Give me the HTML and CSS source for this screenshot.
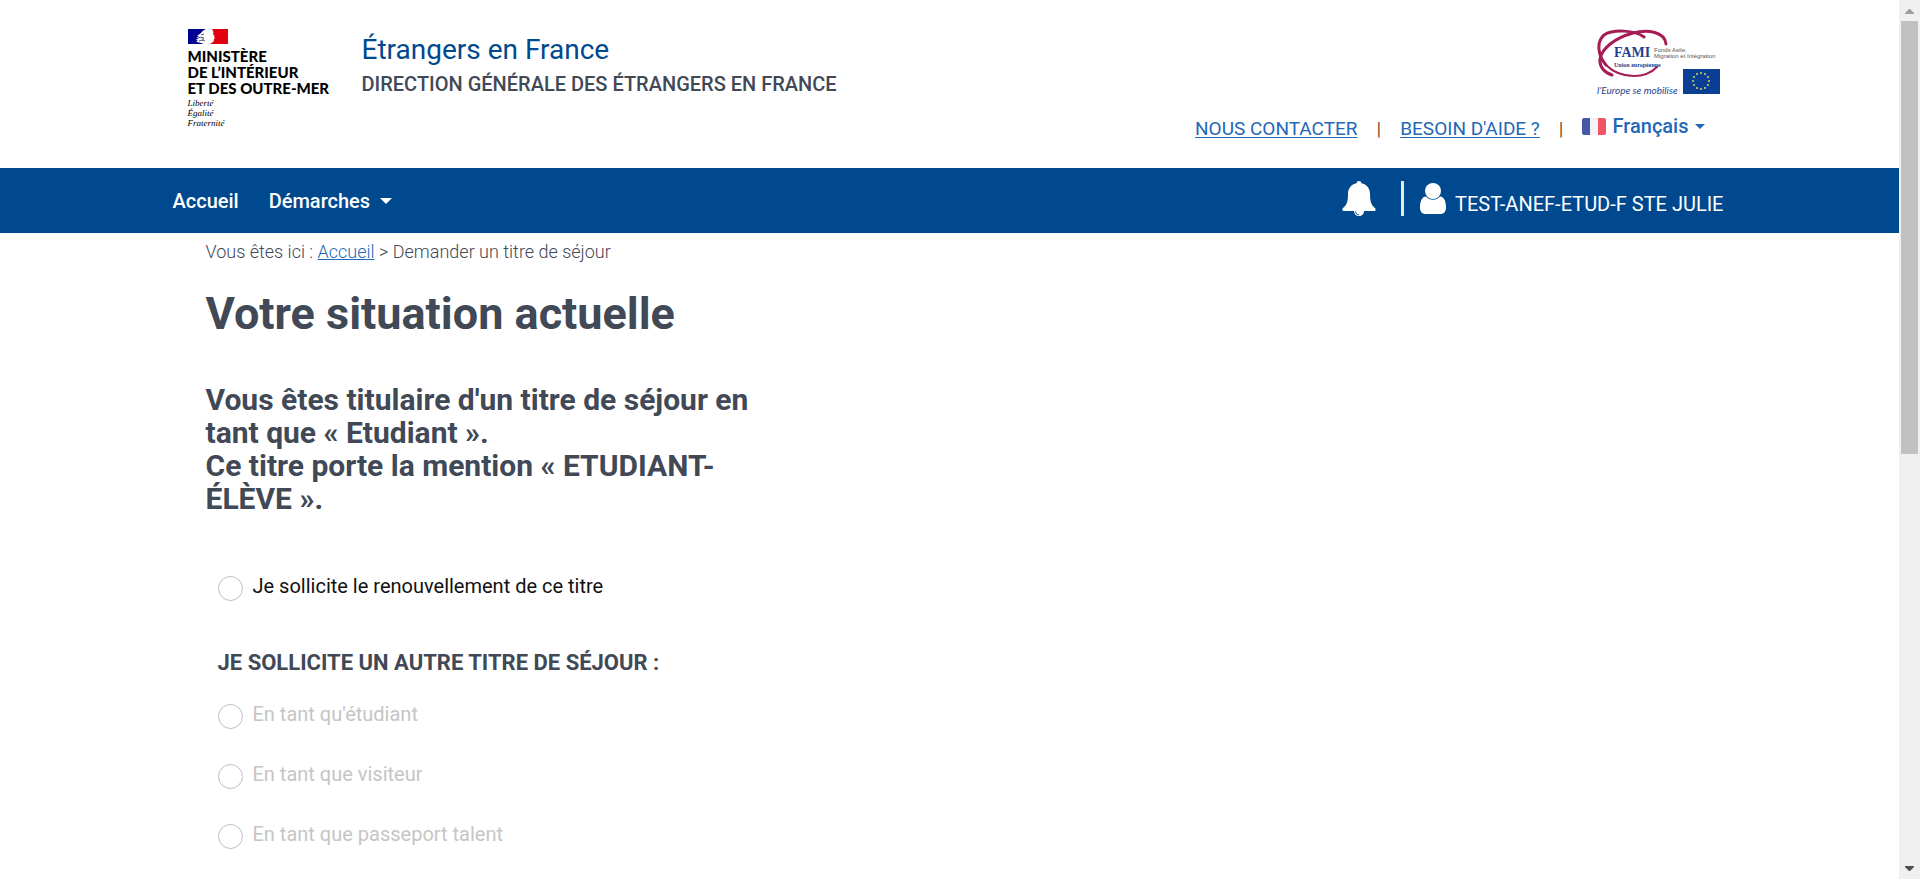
FILE: index.html
```html
<!DOCTYPE html>
<html lang="fr">
<head>
<meta charset="utf-8">
<title>Étrangers en France - Votre situation actuelle</title>
<link rel="stylesheet" href="styles.css">
</head>
<body>
<div class="page">
  <header class="header container">
    <div class="ministry">
      <svg class="marianne" viewBox="0 0 40 15" width="40" height="15" aria-hidden="true">
        <path fill="#000091" d="M0 0h18c-2 1-4 2-5 4l-4 3 2 .2-3 2 3-.4-3 2.200 2 .5-2 1.500c3 0 5 1 8 2H0z"/>
        <path fill="#e1000f" d="M24 0h16v15H22l3-2c1.500-1 .500-2 1-3l1-1-1-1 .5-1-1.500-2 .5-2z"/>
        <path fill="none" stroke="#4a4a86" stroke-width="1" d="M9 10c2-2 4-2 7-1m-5 3c2-1 4-1 6 0m-4-6 3-1m-2 5h2"/>
      </svg>
      <p class="ministry-name">MINISTÈRE<br>DE L’INTÉRIEUR<br>ET DES OUTRE-MER</p>
      <p class="motto">Liberté<br>Égalité<br>Fraternité</p>
    </div>
    <div class="titles">
      <p class="site-title">Étrangers en France</p>
      <p class="site-subtitle">DIRECTION GÉNÉRALE DES ÉTRANGERS EN FRANCE</p>
    </div>
    <div class="header-side">
      <svg class="fami" viewBox="0 0 124 70" width="124" height="70" role="img" aria-label="FAMI, l’Europe se mobilise">
        <g fill="none" stroke="#a51c56" stroke-linecap="round">
          <path stroke-width="3" d="M69 15C68 3 51 0 36 4 18 9 5 19 3 30c-1 8 5 14 12 16"/>
          <path stroke-width="3" d="M47 8C38 1 16 0 7 6-1 13 1 27 9 36"/>
          <path stroke-width="2" d="M9 36c8 8 18 11 28 11 10 0 18-4 23-9"/>
          <path stroke-width="1" d="M2 20c2 16 14 24 30 27"/>
        </g>
        <text class="fami-name" x="17" y="28">FAMI</text>
        <text class="fami-union" x="17" y="38">Union européenne</text>
        <text class="fami-fund" x="57" y="23">Fonds Asile,</text>
        <text class="fami-fund" x="57" y="29">Migration et Intégration</text>
        <text class="fami-slogan" x="0" y="65">l’Europe se mobilise</text>
        <rect x="86" y="40" width="37" height="25" fill="#0b3f94"/>
        <g fill="#d8d65a">
          <circle cx="104" cy="44" r="1"/><circle cx="108" cy="45" r="1"/><circle cx="111" cy="48" r="1"/>
          <circle cx="112" cy="52" r="1"/><circle cx="111" cy="56" r="1"/><circle cx="108" cy="59" r="1"/>
          <circle cx="104" cy="60" r="1"/><circle cx="100" cy="59" r="1"/><circle cx="97" cy="56" r="1"/>
          <circle cx="96" cy="52" r="1"/><circle cx="97" cy="48" r="1"/><circle cx="100" cy="45" r="1"/>
        </g>
      </svg>
      <div class="tools">
        <a href="#contact">NOUS CONTACTER</a>
        <span class="bar">|</span>
        <a href="#aide">BESOIN D'AIDE ?</a>
        <span class="bar">|</span>
        <button class="language" type="button">
          <svg viewBox="0 0 24 17" width="24" height="17" aria-hidden="true">
            <path fill="#4558a7" d="M8 0H2a2 2 0 0 0-2 2v13a2 2 0 0 0 2 2h6z"/>
            <path fill="#f3f3f8" d="M8 0h8v17H8z"/>
            <path fill="#ef5565" d="M16 0h6a2 2 0 0 1 2 2v13a2 2 0 0 1-2 2h-6z"/>
          </svg>
          Français
          <svg viewBox="0 0 10 5" width="10" height="5" aria-hidden="true"><path fill="currentColor" d="M0 0h10L5 5z"/></svg>
        </button>
      </div>
    </div>
  </header>

  <nav class="nav">
    <div class="nav-inner container">
      <a href="#accueil">Accueil</a>
      <button class="nav-menu" type="button">Démarches
        <svg viewBox="0 0 12 6" width="12" height="6" aria-hidden="true"><path fill="currentColor" d="M0 0h12L6 6z"/></svg>
      </button>
      <div class="account">
        <button class="bell" type="button" aria-label="Notifications">
          <svg viewBox="0 0 34 36" width="34" height="36" aria-hidden="true">
            <path fill="#fff" d="M17 0c1.500 0 2.300.8 2.300 2.300C25 3.300 28 7.500 28 13c0 8 1.500 11.500 5.500 14.500V29c0 .6-.4 1-1 1H22c0 3-2.200 5-5 5s-5-2-5-5H1.500c-.6 0-1-.4-1-1v-1.500C4.500 24.500 6 21 6 13c0-5.500 3-9.700 8.700-10.700C14.700.8 15.500 0 17 0z"/>
            <path fill="none" stroke="#00498f" stroke-width="1" d="M13.500 30.500c0 2 1.500 3.300 3.500 3.300"/>
          </svg>
        </button>
        <span class="divider"></span>
        <button class="user" type="button">
          <svg viewBox="0 0 26 31" width="26" height="31" aria-hidden="true">
            <path fill="#fff" d="M6 13.500c1.800 2 4.200 3.300 7 3.300s5.200-1.300 7-3.300c4.500.3 6 5.500 6 11 0 4-2 6.500-5.500 6.500h-15C2 31 0 28.500 0 24.500c0-5.500 1.500-10.700 6-11z"/>
            <circle cx="13" cy="8" r="8" fill="#fff"/>
          </svg>
          <span>TEST-ANEF-ETUD-F STE JULIE</span>
        </button>
      </div>
    </div>
  </nav>

  <main class="main container">
    <p class="breadcrumb">Vous êtes ici : <a href="#accueil">Accueil</a> &gt; Demander un titre de séjour</p>
    <h1>Votre situation actuelle</h1>
    <h2>Vous êtes titulaire d'un titre de séjour en tant que «&nbsp;Etudiant&nbsp;».<br>Ce titre porte la mention «&nbsp;ETUDIANT-ÉLÈVE&nbsp;».</h2>
    <form class="choices">
      <label class="choice"><input type="radio" name="titre"><span>Je sollicite le renouvellement de ce titre</span></label>
      <fieldset>
        <legend>JE SOLLICITE UN AUTRE TITRE DE SÉJOUR :</legend>
        <label class="choice off"><input type="radio" name="titre" disabled><span>En tant qu'étudiant</span></label>
        <label class="choice off"><input type="radio" name="titre" disabled><span>En tant que visiteur</span></label>
        <label class="choice off"><input type="radio" name="titre" disabled><span>En tant que passeport talent</span></label>
      </fieldset>
    </form>
  </main>
</div>
<div class="scrollbar" aria-hidden="true">
  <svg viewBox="0 0 9 5" width="9" height="5"><path fill="#a0a0a0" d="M4 0h1l4 4v1H0V4z"/></svg>
  <div class="track"><div class="thumb"></div></div>
  <svg viewBox="0 0 9 5" width="9" height="5"><path fill="#505050" d="M0 0h9v1L5 5H4L0 1z"/></svg>
</div>
</body>
</html>
```
FILE: styles.css
```css
* { box-sizing: border-box; }

body {
  margin: 0;
  display: grid;
  grid-template-columns: minmax(0, 1fr) 21px;
  height: 100vh;
  overflow: hidden;
  background: #fff;
  color: #414856;
  font-family: Roboto, "Liberation Sans", sans-serif;
  font-size: 20px;
  line-height: 24px;
}

p, h1, h2 { margin: 0; }
svg { display: block; flex: none; }
a { color: #2367b7; }

button {
  padding: 0;
  border: 0;
  background: none;
  color: inherit;
  font: inherit;
  cursor: pointer;
}

.page { overflow: hidden; }

.container {
  max-width: 1600px;
  margin: 0 auto;
  padding: 0 24px;
}

/* Header */
.header {
  display: flex;
  align-items: flex-start;
  min-height: 168px;
  padding: 29px 29px 0 38px;
}

.ministry { width: 174px; color: #000; }

.ministry-name {
  margin-top: 4px;
  font-family: Lato, sans-serif;
  font-size: 15px;
  font-weight: 900;
  line-height: 16px;
}

.motto {
  margin-top: 2px;
  font-family: "Liberation Serif", serif;
  font-size: 9px;
  font-style: italic;
  line-height: 10px;
}

.site-title {
  margin-top: 3px;
  color: #00498f;
  font-size: 28px;
  line-height: 36px;
}

.site-subtitle { margin-top: 4px; font-weight: 500; }

.header-side {
  display: flex;
  flex-direction: column;
  align-items: flex-end;
  margin-left: auto;
}

.fami-name { fill: #243f8f; font: 700 14px "Liberation Serif", serif; }
.fami-union { fill: #243f8f; font: 700 6px "Liberation Serif", serif; }
.fami-fund { fill: #555; font: 6px "Liberation Sans", sans-serif; }
.fami-slogan { fill: #243f8f; font: italic 10px Lato, sans-serif; }

.tools {
  display: flex;
  align-items: center;
  gap: 19px;
  margin-top: 15px;
  padding-right: 16px;
  font-size: 19px;
}

.tools a { text-underline-offset: 2px; }
.bar { color: #8a4a35; }
.tools a, .bar { padding-top: 2px; }

.language {
  display: flex;
  align-items: center;
  gap: 6px;
  padding-bottom: 4px;
  color: #2367b7;
  font-size: 20px;
  font-weight: 500;
}

/* Navigation */
.nav { background: #00498f; color: #fff; }

.nav-inner {
  display: flex;
  align-items: center;
  gap: 30px;
  min-height: 65px;
  padding: 0 26px 0 23px;
  font-weight: 500;
}

.nav a { color: #fff; text-decoration: none; }

.nav-menu {
  display: flex;
  align-items: center;
  gap: 10px;
}

.account {
  display: flex;
  align-items: center;
  gap: 16px;
  margin-left: auto;
  padding-bottom: 4px;
  font-weight: 400;
}

.bell { margin-right: 9px; }
.divider { width: 3px; height: 35px; background: #e8e8e8; }

.user {
  display: flex;
  align-items: center;
  gap: 9px;
}

.user span { padding-top: 10px; }

/* Content */
.main { padding: 7px 56px; }
.breadcrumb { font-size: 18px; font-weight: 300; }

h1 {
  margin-top: 22px;
  font-size: 45px;
  font-weight: 700;
  line-height: 56px;
}

h2 {
  max-width: 560px;
  margin-top: 41px;
  font-size: 30px;
  font-weight: 700;
  line-height: 33px;
}

.choices { padding: 58px 12px 0; }

.choice {
  display: flex;
  gap: 10px;
  color: #111;
  line-height: 26px;
}

.choice input {
  appearance: none;
  flex: none;
  width: 25px;
  height: 25px;
  margin: 3px 0 0;
  border: 1px solid #bfbfbf;
  border-radius: 50%;
  background: #fff;
}

.choice.off { margin-bottom: 32px; color: #c5c5c5; }

fieldset {
  margin: 48px 0 0;
  padding: 0;
  border: 0;
}

legend {
  margin-bottom: 24px;
  padding: 0;
  font-size: 22px;
  font-weight: 700;
  line-height: 28px;
}

/* Scrollbar */
.scrollbar {
  display: flex;
  flex-direction: column;
  align-items: center;
  justify-content: space-between;
  padding: 9px 2px 8px;
  background: #f0f0f0;
}

.track {
  display: grid;
  grid-template-rows: 16fr 15fr;
  flex: 1;
  width: 17px;
  margin: 7px 0;
}

.thumb { background: #c1c1c1; }
```
